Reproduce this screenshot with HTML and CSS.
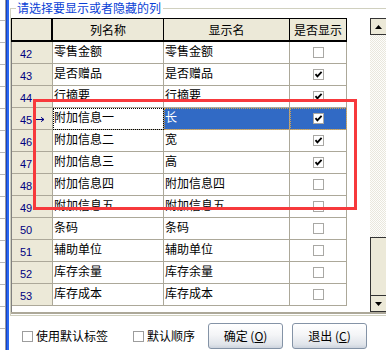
FILE: index.html
```html
<!DOCTYPE html>
<html lang="zh-CN">
<head>
<meta charset="utf-8">
<title>选择显示列</title>
<link rel="stylesheet" href="styles.css">
</head>
<body>
<div class="window">
  <div class="side"></div>
  <div class="edge"></div>
  <div class="panel">
    <div class="group">
      <div class="group-head">
        <span class="corner"></span>
        <span class="title">请选择要显示或者隐藏的列</span>
        <span class="rule"></span>
      </div>
      <div class="group-body">
        <div class="grid">
          <div class="table">
            <div class="row head">
              <div class="c rh"></div>
              <div class="c c1">列名称</div>
              <div class="c c2">显示名</div>
              <div class="c c3">是否显示</div>
            </div>
            <div class="row"><div class="c rh">42</div><div class="c c1">零售金额</div><div class="c c2">零售金额</div><div class="c c3"><span class="cb"></span></div></div>
            <div class="row"><div class="c rh">43</div><div class="c c1">是否赠品</div><div class="c c2">是否赠品</div><div class="c c3"><span class="cb"><svg viewBox="0 0 9 9" width="9" height="9"><path d="M1.5 4.2 L3.4 6.4 L7.6 1.8" fill="none" stroke="#000" stroke-width="1.8"/></svg></span></div></div>
            <div class="row"><div class="c rh">44</div><div class="c c1">行摘要</div><div class="c c2">行摘要</div><div class="c c3"><span class="cb"><svg viewBox="0 0 9 9" width="9" height="9"><path d="M1.5 4.2 L3.4 6.4 L7.6 1.8" fill="none" stroke="#000" stroke-width="1.8"/></svg></span></div></div>
            <div class="row current"><div class="c rh">45<svg class="arrow" viewBox="0 0 9 5" width="9" height="5"><path d="M0 2.5 H8 M5 0.3 L8 2.5 L5 4.7" fill="none" stroke="#000080" stroke-width="1"/></svg></div><div class="c c1 focus">附加信息一</div><div class="c c2 sel">长</div><div class="c c3 sel"><span class="cb"><svg viewBox="0 0 9 9" width="9" height="9"><path d="M1.5 4.2 L3.4 6.4 L7.6 1.8" fill="none" stroke="#000" stroke-width="1.8"/></svg></span></div></div>
            <div class="row"><div class="c rh">46</div><div class="c c1">附加信息二</div><div class="c c2">宽</div><div class="c c3"><span class="cb"><svg viewBox="0 0 9 9" width="9" height="9"><path d="M1.5 4.2 L3.4 6.4 L7.6 1.8" fill="none" stroke="#000" stroke-width="1.8"/></svg></span></div></div>
            <div class="row"><div class="c rh">47</div><div class="c c1">附加信息三</div><div class="c c2">高</div><div class="c c3"><span class="cb"><svg viewBox="0 0 9 9" width="9" height="9"><path d="M1.5 4.2 L3.4 6.4 L7.6 1.8" fill="none" stroke="#000" stroke-width="1.8"/></svg></span></div></div>
            <div class="row"><div class="c rh">48</div><div class="c c1">附加信息四</div><div class="c c2">附加信息四</div><div class="c c3"><span class="cb"></span></div></div>
            <div class="row"><div class="c rh">49</div><div class="c c1">附加信息五</div><div class="c c2">附加信息五</div><div class="c c3"><span class="cb"></span></div></div>
            <div class="row"><div class="c rh">50</div><div class="c c1">条码</div><div class="c c2">条码</div><div class="c c3"><span class="cb"></span></div></div>
            <div class="row"><div class="c rh">51</div><div class="c c1">辅助单位</div><div class="c c2">辅助单位</div><div class="c c3"><span class="cb"></span></div></div>
            <div class="row"><div class="c rh">52</div><div class="c c1">库存余量</div><div class="c c2">库存余量</div><div class="c c3"><span class="cb"></span></div></div>
            <div class="row"><div class="c rh">53</div><div class="c c1">库存成本</div><div class="c c2">库存成本</div><div class="c c3"><span class="cb"></span></div></div>
            <div class="spacer"></div>
          </div>
          <div class="filler"></div>
          <div class="vscroll">
            <div class="sb-btn up"><svg viewBox="0 0 7 4" width="7" height="4"><polygon points="0,4 7,4 3.5,0" fill="#000"/></svg></div>
            <div class="track"></div>
            <div class="thumb"></div>
            <div class="sb-btn down"><svg viewBox="0 0 7 4" width="7" height="4"><polygon points="0,0 7,0 3.5,4" fill="#000"/></svg></div>
          </div>
        </div>
      </div>
    </div>
    <div class="footer">
      <label class="opt opt1"><span class="box"></span><span>使用默认标签</span></label>
      <label class="opt opt2"><span class="box"></span><span>默认顺序</span></label>
      <button class="btn btn1" type="button">确定 (<u>O</u>)</button>
      <button class="btn btn2" type="button">退出 (<u>C</u>)</button>
    </div>
  </div>
</div>
<div class="mark"></div>
</body>
</html>
```
FILE: styles.css
```css
html, body {
  margin: 0;
  padding: 0;
}
body {
  width: 386px;
  height: 350px;
  overflow: hidden;
  position: relative;
  background: #fff;
  color: #000;
  font-family: "Noto Sans CJK SC", "Noto Sans", sans-serif;
  font-size: 12px;
}
.window {
  display: flex;
  height: 350px;
}
.side {
  width: 5px;
  flex: none;
  border-right: 1px solid #9a9a9a;
  background: repeating-linear-gradient(to bottom, transparent 0 20px, #b8b8b8 20px 21px, transparent 21px 22px);
}
.edge {
  width: 3px;
  flex: none;
  background: linear-gradient(to right, #1642c4 0 1px, #2a68f0 1px);
}
.panel {
  flex: 1;
  min-width: 0;
  display: flex;
  flex-direction: column;
}
.group {
  margin-left: 1px;
}
.group-head {
  display: flex;
  height: 18px;
}
.corner {
  width: 6px;
  flex: none;
  box-sizing: border-box;
  margin-top: 8px;
  border-top: 1px solid #d0d0bf;
  border-left: 1px solid #d0d0bf;
}
.title {
  color: #0a3fd6;
  line-height: 16px;
  padding: 0 1px;
  white-space: nowrap;
}
.rule {
  flex: 1;
  margin-top: 8px;
  margin-left: 1px;
  height: 0;
  border-top: 1px solid #d0d0bf;
}
.group-body {
  border-left: 1px solid #d0d0bf;
  border-bottom: 1px solid #d0d0bf;
  padding-bottom: 1px;
}
.grid {
  display: flex;
  width: 375px;
  border-bottom: 2px solid #aca899;
}
.table {
  width: 336px;
  flex: none;
  box-sizing: border-box;
  border-left: 1px solid #808080;
  display: flex;
  flex-direction: column;
}
.filler {
  width: 23px;
  flex: none;
}
.row {
  display: flex;
  height: 22px;
  flex: none;
}
.c {
  box-sizing: border-box;
  border-right: 1px solid #aca899;
  border-bottom: 1px solid #aca899;
  white-space: nowrap;
  overflow: hidden;
  line-height: 14px;
  padding: 2px 0 0 1px;
}
.rh { width: 41px; }
.c1 { width: 111px; }
.c2 { width: 126px; }
.c3 { width: 57px; }

.row .rh {
  background: #ece9d8;
  display: flex;
  align-items: flex-end;
  padding: 0 0 2px 8px;
  font-family: "Liberation Sans", Arial, sans-serif;
  font-size: 11px;
  line-height: 13px;
  color: #000080;
}
.arrow {
  flex: none;
  margin-left: 4px;
  margin-bottom: 5px;
}
.row .c3 {
  display: flex;
  align-items: center;
  justify-content: center;
  padding: 0;
}
.cb {
  width: 11px;
  height: 11px;
  box-sizing: border-box;
  border: 1px solid #a9a8a4;
  background: #fff;
  display: flex;
  align-items: center;
  justify-content: center;
}
.cb svg {
  display: block;
}

.head {
  height: 24px;
  margin-left: -1px;
}
.head .c {
  background: #ece9d8;
  border-top: 1px solid #000;
  border-bottom: 2px solid #000;
  border-right: 1px solid #000;
  display: flex;
  align-items: center;
  justify-content: center;
  padding: 0;
  line-height: 14px;
  color: #000;
}
.head .rh {
  width: 42px;
  border-left: 1px solid #000;
  border-right: 2px solid #000;
}

.focus {
  outline: 1px dotted #000;
  outline-offset: -1px;
}
.sel {
  background: #316ac5;
  color: #fff;
  outline: 1px dotted #d0a050;
  outline-offset: -1px;
}
.spacer {
  height: 6px;
  flex: none;
}

.vscroll {
  width: 16px;
  flex: none;
  display: flex;
  flex-direction: column;
}
.sb-btn {
  height: 17px;
  flex: none;
  box-sizing: border-box;
  background: #ece9d8;
  border-left: 1px solid #333;
  border-top: 1px solid #333;
  border-bottom: 1px solid #333;
  display: flex;
  align-items: center;
  justify-content: center;
}
.sb-btn svg {
  display: block;
}
.track {
  flex: 1;
  background: repeating-conic-gradient(#e9e7dd 0 25%, #fdfdfb 0 50%) 0 0 / 2px 2px;
}
.thumb {
  height: 58px;
  flex: none;
  box-sizing: border-box;
  background: #ece9d8;
  border-left: 1px solid #333;
  border-top: 1px solid #333;
}
.sb-btn.down {
  border-top: 1px solid #333;
}

.footer {
  flex: 1;
  display: flex;
  align-items: flex-start;
  padding-left: 13px;
}
.opt {
  display: flex;
  align-items: center;
  gap: 3px;
  height: 16px;
  margin-top: 12px;
  line-height: 16px;
  white-space: nowrap;
}
.opt2 {
  margin-left: 25px;
}
.box {
  width: 11px;
  height: 11px;
  flex: none;
  box-sizing: border-box;
  border: 1px solid #9d9d9d;
  background: #fff;
}
.btn {
  width: 75px;
  height: 26px;
  flex: none;
  box-sizing: border-box;
  margin-top: 7px;
  padding: 0;
  border: 1px solid #8493a6;
  border-radius: 3px;
  background: linear-gradient(#ffffff, #f4f5f7 45%, #e0e4ea 85%, #ccd3dd);
  font-family: "Noto Sans CJK SC", "Noto Sans", sans-serif;
  font-size: 12px;
  line-height: 14px;
  color: #000;
  display: flex;
  align-items: center;
  justify-content: center;
}
.btn1 {
  margin-left: 13px;
}
.btn2 {
  margin-left: 9px;
}
.mark {
  position: absolute;
  left: 33px;
  top: 99px;
  width: 324px;
  height: 111px;
  box-sizing: border-box;
  border: 3px solid #f7393c;
}
```
